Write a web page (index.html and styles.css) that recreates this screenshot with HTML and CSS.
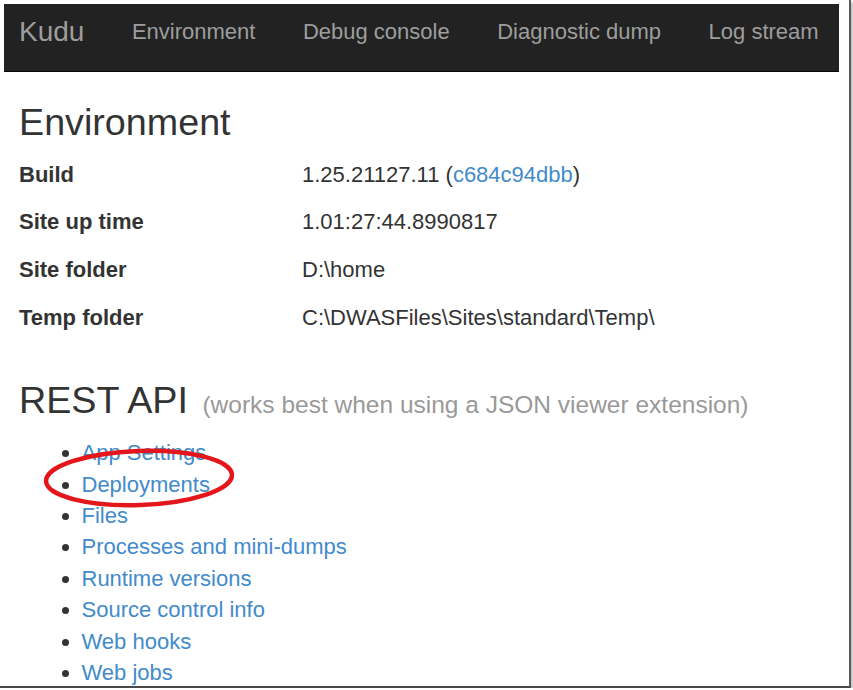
FILE: index.html
```html
<!DOCTYPE html>
<html lang="en">
<head>
<meta charset="utf-8">
<title>Kudu - Environment</title>
<link rel="stylesheet" href="styles.css">
</head>
<body>
<div class="frame">
  <nav class="navbar">
    <span class="brand">Kudu</span>
    <a class="nav-link" href="#">Environment</a>
    <a class="nav-link" href="#">Debug console</a>
    <a class="nav-link" href="#">Diagnostic dump</a>
    <a class="nav-link" href="#">Log stream</a>
  </nav>
  <main class="content">
    <h2 class="heading">Environment</h2>
    <table class="env-table">
      <tr><th>Build</th><td>1.25.21127.11 (<a href="#">c684c94dbb</a>)</td></tr>
      <tr><th>Site up time</th><td>1.01:27:44.8990817</td></tr>
      <tr><th>Site folder</th><td>D:\home</td></tr>
      <tr><th>Temp folder</th><td>C:\DWASFiles\Sites\standard\Temp\</td></tr>
    </table>
    <h2 class="heading rest">REST API <small>(works best when using a JSON viewer extension)</small></h2>
    <div class="list-wrap">
      <ul class="api-list">
        <li><a href="#">App Settings</a></li>
        <li><a href="#">Deployments</a></li>
        <li><a href="#">Files</a></li>
        <li><a href="#">Processes and mini-dumps</a></li>
        <li><a href="#">Runtime versions</a></li>
        <li><a href="#">Source control info</a></li>
        <li><a href="#">Web hooks</a></li>
        <li><a href="#">Web jobs</a></li>
      </ul>
      <svg class="circle-mark" width="200" height="70" viewBox="0 0 200 70" aria-hidden="true">
        <ellipse cx="100" cy="35" rx="93" ry="27" fill="none" stroke="#e5161b" stroke-width="4.5" transform="rotate(-2 100 35)"/>
      </svg>
    </div>
  </main>
</div>
</body>
</html>
```

FILE: styles.css
```css
html, body {
  margin: 0;
  padding: 0;
  background: #ffffff;
}

body {
  font-family: "Liberation Sans", Arial, sans-serif;
  color: #333333;
  overflow: hidden;
}

.frame {
  box-sizing: border-box;
  width: 851px;
  height: 688px;
  padding: 4px 0 0 4px;
  border-right: 2px solid #5a5a5a;
  border-bottom: 2px solid #4a4a4a;
  box-shadow: 2px 2px 2px rgba(0, 0, 0, 0.25);
  overflow: hidden;
}

.navbar {
  box-sizing: border-box;
  width: 835px;
  height: 68px;
  background: #222222;
  border-bottom: 1px solid #080808;
  display: flex;
  align-items: flex-start;
  gap: 47.5px;
  padding: 13px 0 0 15px;
}

.brand {
  font-size: 28px;
  line-height: 30px;
  color: #9d9d9d;
}

.nav-link {
  font-size: 22px;
  line-height: 30px;
  color: #9d9d9d;
  text-decoration: none;
}

.content {
  padding: 0 0 0 15px;
}

.heading {
  margin: 30px 0 0;
  font-size: 37.7px;
  line-height: 41.5px;
  font-weight: normal;
  color: #333333;
}

.heading small {
  font-size: 24.5px;
  color: #999999;
  margin-left: 4px;
}

.env-table {
  border-collapse: collapse;
  margin-top: 7px;
}

.env-table th,
.env-table td {
  font-size: 22px;
  line-height: 31.4px;
  padding: 8.15px 0;
  text-align: left;
  vertical-align: top;
}

.env-table th {
  width: 283px;
  font-weight: bold;
}

.env-table a,
.api-list a {
  color: #428bca;
  text-decoration: none;
}

.rest {
  margin-top: 38.4px;
}

.list-wrap {
  position: relative;
}

.api-list {
  margin: 12px 0 0;
  padding-left: 62.5px;
  list-style: disc;
}

.api-list li {
  font-size: 22px;
  line-height: 31.4px;
}

.circle-mark {
  position: absolute;
  left: 20px;
  top: 6px;
}
```
